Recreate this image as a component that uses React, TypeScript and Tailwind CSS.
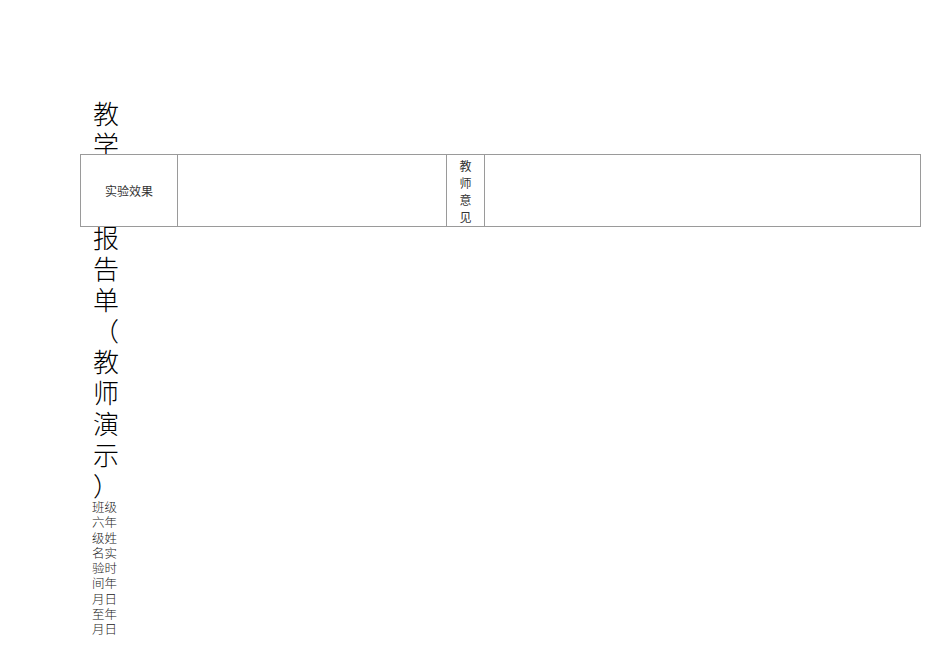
const title = ['教', '学', '实', '验', '报', '告', '单', '（', '教', '师', '演', '示', '）'];

export default function App() {
  return (
    <div
      className="relative h-[672px] w-[950px] bg-white text-black"
      style={{ fontFamily: '"Noto Sans CJK SC", "Noto Sans", sans-serif' }}
    >
      <div className="pl-[92px] pt-[97px]">
        {/* vertical title, one glyph per line */}
        <div className="w-[28px] text-[26px] font-light leading-[31px]">
          {title.map((c, i) => (
            <div key={i} className="text-center">{c}</div>
          ))}
        </div>
        <div className="-mt-[1px] w-[27px] break-all text-[12.5px] font-light leading-[15.3px] text-[#222]">
          班级六年级姓名实验时间年月日至年月日
        </div>
      </div>

      {/* table sits over the title column */}
      <div className="absolute left-[80px] top-[154px] flex h-[73px] w-[841px] border border-[#9a9a9a] bg-white text-[#333]">
        <div className="flex w-[97px] items-center justify-center border-r border-[#9a9a9a] text-[12px]">
          实验效果
        </div>
        <div className="w-[269px] border-r border-[#9a9a9a]" />
        <div className="flex w-[38px] flex-col items-center justify-center border-r border-[#9a9a9a] text-[12px] leading-[17px]">
          <span>教</span>
          <span>师</span>
          <span>意</span>
          <span>见</span>
        </div>
        <div className="flex-1" />
      </div>
    </div>
  );
}
